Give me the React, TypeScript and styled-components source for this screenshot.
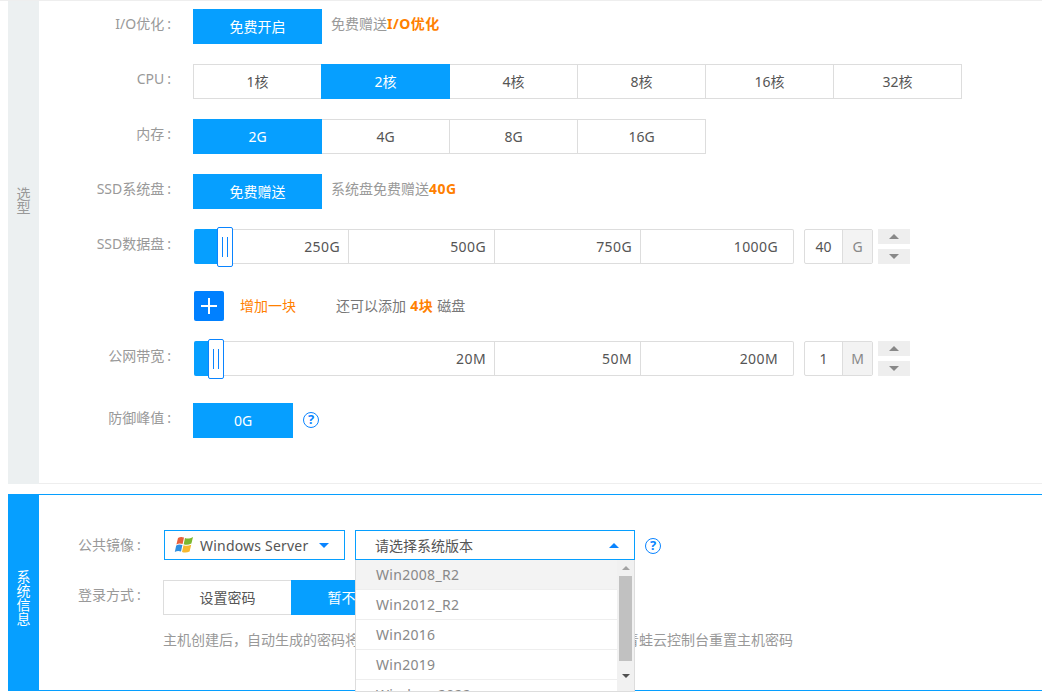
import * as React from 'react';
import styled, { createGlobalStyle, css } from 'styled-components';

const BLUE = '#069fff';
const LINK = '#0a84ff';
const ORANGE = '#ff8000';
const COMMA = '\uFF0C';

const Global = createGlobalStyle`
  html, body {
    margin: 0;
    padding: 0;
    background: #fff;
    overflow: hidden;
  }
  body {
    font-family: "Noto Sans", "Noto Sans CJK SC", sans-serif;
    font-size: 14px;
    color: #555;
  }
  * { box-sizing: border-box; }
`;

const Page = styled.div`
  width: 1042px;
  height: 697px;
  overflow: hidden;
`;

const ModelSection = styled.section`
  display: flex;
  border-top: 1px solid #eee;
  margin-bottom: 10px;
`;

const SystemSection = styled.section`
  display: flex;
  margin-left: 8px;
  border-top: 1px solid #069fff;
  border-bottom: 1px solid #069fff;
`;

const Tab = styled.div<{ $active?: boolean; $top: number }>`
  flex: 0 0 31px;
  margin-left: ${(p) => (p.$active ? '0' : '8px')};
  padding-top: ${(p) => p.$top}px;
  background: ${(p) => (p.$active ? BLUE : '#ecf0f1')};
  color: ${(p) => (p.$active ? '#fff' : '#999')};
  text-align: center;
  line-height: 14px;
`;

const TabChar = styled.div`
  height: 14px;
`;

const Content = styled.div`
  flex: 1;
  display: flex;
  flex-direction: column;
  gap: 20px;
  padding: 8px 0 45px;
  border-bottom: 1px solid #eee;
`;

const SystemContent = styled.div`
  flex: 1;
  display: flex;
  flex-direction: column;
  gap: 20px;
  padding: 35px 0 0 39px;
  height: 195px;
`;

const Row = styled.div<{ $offset?: number }>`
  display: flex;
  align-items: flex-start;
  margin-top: ${(p) => p.$offset || 0}px;
`;

const Label = styled.div`
  flex: 0 0 132px;
  margin-right: 22px;
  text-align: right;
  line-height: 30px;
  color: #999;
  white-space: nowrap;
`;

const SystemLabel = styled.div`
  flex: 0 0 62px;
  min-width: 0;
  margin-right: 23px;
  line-height: 30px;
  color: #999;
  white-space: nowrap;
`;

const Colon = styled.span`
  margin-left: 3px;
`;

const Options = styled.div`
  display: flex;
`;

const Option = styled.div<{ $on?: boolean; $width?: number }>`
  width: ${(p) => p.$width || 129}px;
  height: 35px;
  margin-left: -1px;
  line-height: 34px;
  text-align: center;
  border: 1px solid ${(p) => (p.$on ? BLUE : '#ddd')};
  background: ${(p) => (p.$on ? BLUE : '#fff')};
  color: ${(p) => (p.$on ? '#fff' : '#555')};
  position: relative;
  z-index: ${(p) => (p.$on ? 1 : 0)};
  &:first-child {
    margin-left: 0;
  }
`;

const Note = styled.div`
  margin-left: 9px;
  line-height: 30px;
  color: #999;
`;

const Strong = styled.b`
  color: ${ORANGE};
  font-weight: 700;
  letter-spacing: 0.5px;
`;

const Track = styled.div`
  position: relative;
  display: flex;
  width: 600px;
  height: 35px;
  margin-left: 1px;
  border: 1px solid #ddd;
  border-left: 0;
  border-radius: 2px;
`;

const Mark = styled.div<{ $width: number }>`
  flex: 0 0 ${(p) => p.$width}px;
  margin-bottom: -1px;
  padding-right: 8px;
  text-align: right;
  line-height: 34px;
  letter-spacing: 0.4px;
  border-right: 1px solid #ddd;
  &:nth-last-child(3) {
    flex: 1;
    margin-bottom: 0;
    padding-right: 15px;
    border-right: 0;
  }
`;

const Fill = styled.div<{ $width: number }>`
  position: absolute;
  left: 0;
  top: -1px;
  bottom: -1px;
  width: ${(p) => p.$width}px;
  background: ${BLUE};
  border-radius: 2px 0 0 2px;
`;

const Handle = styled.div<{ $left: number }>`
  position: absolute;
  left: ${(p) => p.$left}px;
  top: -3px;
  width: 16px;
  height: 40px;
  display: flex;
  justify-content: center;
  align-items: center;
  gap: 4px;
  background: #fff;
  border: 1px solid ${LINK};
  border-radius: 2px;
  &::before,
  &::after {
    content: '';
    width: 1px;
    height: 20px;
    background: ${LINK};
  }
`;

const Amount = styled.div`
  display: flex;
  width: 69px;
  height: 35px;
  margin-left: 10px;
  border: 1px solid #ddd;
  border-radius: 2px;
  text-align: center;
  line-height: 33px;
`;

const AmountValue = styled.div`
  flex: 1;
`;

const AmountUnit = styled.div`
  flex: 0 0 30px;
  background: #f3f3f3;
  border-left: 1px solid #ddd;
  color: #888;
`;

const Stepper = styled.div`
  display: flex;
  flex-direction: column;
  justify-content: space-between;
  width: 32px;
  height: 35px;
  margin-left: 5px;
`;

const Step = styled.div`
  height: 15px;
  display: flex;
  align-items: center;
  justify-content: center;
  background: #eee;
`;

const Triangle = styled.i<{ $up?: boolean; $color: string; $size: number }>`
  display: block;
  width: 0;
  height: 0;
  border-left: ${(p) => p.$size}px solid transparent;
  border-right: ${(p) => p.$size}px solid transparent;
  ${(p) =>
    p.$up
      ? css`border-bottom: ${p.$size * 1.15}px solid ${p.$color};`
      : css`border-top: ${p.$size * 1.15}px solid ${p.$color};`}
`;

const AddButton = styled.div`
  flex: 0 0 30px;
  height: 30px;
  margin-left: 1px;
  position: relative;
  background: #0080ff;
  border-radius: 2px;
  &::before,
  &::after {
    content: '';
    position: absolute;
    background: #fff;
  }
  &::before {
    left: 7px;
    top: 14px;
    width: 16px;
    height: 2px;
  }
  &::after {
    left: 14px;
    top: 7px;
    width: 2px;
    height: 16px;
  }
`;

const AddText = styled.div`
  margin-left: 16px;
  width: 96px;
  line-height: 30px;
  color: ${ORANGE};
`;

const AddNote = styled.div`
  line-height: 30px;
  color: #777;
  word-spacing: 0.5px;
`;

const Help = styled.div<{ $left: number; $top: number }>`
  flex: 0 0 16px;
  width: 16px;
  height: 16px;
  margin: ${(p) => p.$top}px 0 0 ${(p) => p.$left}px;
  border: 1.5px solid ${LINK};
  border-radius: 50%;
  color: ${LINK};
  font-size: 13px;
  font-weight: 700;
  line-height: 13px;
  text-align: center;
`;

const SelectGroup = styled.div`
  position: relative;
  display: flex;
  align-items: flex-start;
  margin-left: 1px;
`;

const Select = styled.div<{ $width: number; $pad: number }>`
  display: flex;
  align-items: center;
  justify-content: space-between;
  width: ${(p) => p.$width}px;
  height: 30px;
  margin-right: 10px;
  padding: 0 15px 0 ${(p) => p.$pad}px;
  border: 1px solid ${BLUE};
  white-space: nowrap;
`;

const OsName = styled.span`
  display: flex;
  align-items: center;
  gap: 6px;
  letter-spacing: 0.2px;
`;

const Menu = styled.div`
  position: absolute;
  left: 191px;
  top: 30px;
  width: 280px;
  height: 132px;
  z-index: 5;
  display: flex;
  background: #fff;
  border: 1px solid #ddd;
  border-top: 0;
`;

const MenuList = styled.div`
  flex: 1;
  overflow: hidden;
`;

const MenuItem = styled.div<{ $hover?: boolean }>`
  height: 30px;
  padding-left: 20px;
  line-height: 29px;
  color: #888;
  letter-spacing: 0.3px;
  background: ${(p) => (p.$hover ? '#f3f3f3' : '#fff')};
  border-bottom: 1px solid #eee;
`;

const Rail = styled.div`
  flex: 0 0 17px;
  display: flex;
  flex-direction: column;
  align-items: center;
  padding-top: 6px;
  background: #f1f1f1;
`;

const Thumb = styled.div`
  width: 13px;
  height: 85px;
  margin: 6px 0 13px;
  background: #c1c1c1;
`;

const Hint = styled.div`
  margin: -6px 0 0 85px;
  color: #999;
  white-space: nowrap;
`;

const WindowsLogo = () => (
  <svg width="20" height="18" viewBox="0 0 20 18">
    <path d="M4 2 C6 .8 8 .8 10 1.6 L8.6 8 C6.6 7.2 4.6 7.2 2.4 8.4Z" fill="#e8603c" />
    <path d="M11 1.9 C13.4 3 15.6 2.8 19 1 L17.4 7.6 C14.6 9 12.2 9.2 9.7 8.3Z" fill="#7cb82f" />
    <path d="M2.2 9.4 C4.4 8.2 6.2 8.2 8.4 9 L7 15.6 C5 14.8 3 14.8 .8 16Z" fill="#2f8fe0" />
    <path d="M9.5 9.3 C12 10.2 14.4 10 17.2 8.7 L15.6 15.4 C13 16.8 10.4 16.8 8 15.9Z" fill="#f7b92e" />
  </svg>
);

const VerticalTitle = ({ text }: { text: string }) => (
  <>
    {text.split('').map((c) => (
      <TabChar key={c}>{c}</TabChar>
    ))}
  </>
);

const Slider = ({ fill, handle, marks }: { fill: number; handle: number; marks: { text: string; width: number }[] }) => (
  <Track>
    {marks.map((m) => (
      <Mark key={m.text} $width={m.width}>{m.text}</Mark>
    ))}
    <Fill $width={fill} />
    <Handle $left={handle} />
  </Track>
);

const Spinner = ({ value, unit }: { value: string; unit: string }) => (
  <>
    <Amount>
      <AmountValue>{value}</AmountValue>
      <AmountUnit>{unit}</AmountUnit>
    </Amount>
    <Stepper>
      <Step><Triangle $up $color="#888" $size={5} /></Step>
      <Step><Triangle $color="#888" $size={5} /></Step>
    </Stepper>
  </>
);

const App = () => (
  <Page>
    <Global />
    <ModelSection>
      <Tab $top={186}>
        <VerticalTitle text="选型" />
      </Tab>
      <Content>
        <Row>
          <Label>I/O优化<Colon>:</Colon></Label>
          <Options><Option $on>免费开启</Option></Options>
          <Note>免费赠送<Strong>I/O优化</Strong></Note>
        </Row>
        <Row>
          <Label>CPU<Colon>:</Colon></Label>
          <Options>
            {['1核', '2核', '4核', '8核', '16核', '32核'].map((c) => (
              <Option key={c} $on={c === '2核'}>{c}</Option>
            ))}
          </Options>
        </Row>
        <Row>
          <Label>内存<Colon>:</Colon></Label>
          <Options>
            {['2G', '4G', '8G', '16G'].map((c) => (
              <Option key={c} $on={c === '2G'}>{c}</Option>
            ))}
          </Options>
        </Row>
        <Row>
          <Label>SSD系统盘<Colon>:</Colon></Label>
          <Options><Option $on>免费赠送</Option></Options>
          <Note>系统盘免费赠送<Strong>40G</Strong></Note>
        </Row>
        <Row>
          <Label>SSD数据盘<Colon>:</Colon></Label>
          <Slider
            fill={24}
            handle={23}
            marks={[
              { text: '250G', width: 155 },
              { text: '500G', width: 146 },
              { text: '750G', width: 146 },
              { text: '1000G', width: 153 },
            ]}
          />
          <Spinner value="40" unit="G" />
        </Row>
        <Row $offset={7}>
          <Label />
          <AddButton />
          <AddText>增加一块</AddText>
          <AddNote>还可以添加 <Strong>4块</Strong> 磁盘</AddNote>
        </Row>
        <Row>
          <Label>公网带宽<Colon>:</Colon></Label>
          <Slider
            fill={15}
            handle={14}
            marks={[
              { text: '20M', width: 301 },
              { text: '50M', width: 146 },
              { text: '200M', width: 153 },
            ]}
          />
          <Spinner value="1" unit="M" />
        </Row>
        <Row $offset={7}>
          <Label>防御峰值<Colon>:</Colon></Label>
          <Options><Option $on $width={100}>0G</Option></Options>
          <Help $left={10} $top={9}>?</Help>
        </Row>
      </Content>
    </ModelSection>
    <SystemSection>
      <Tab $active $top={75}>
        <VerticalTitle text="系统信息" />
      </Tab>
      <SystemContent>
        <Row>
          <SystemLabel>公共镜像<Colon>:</Colon></SystemLabel>
          <SelectGroup>
            <Select $width={181} $pad={9}>
              <OsName><WindowsLogo />Windows Server</OsName>
              <Triangle $color={LINK} $size={5} />
            </Select>
            <Select $width={280} $pad={19}>
              请选择系统版本
              <Triangle $up $color={LINK} $size={5} />
            </Select>
            <Menu>
              <MenuList>
                <MenuItem $hover>Win2008_R2</MenuItem>
                <MenuItem>Win2012_R2</MenuItem>
                <MenuItem>Win2016</MenuItem>
                <MenuItem>Win2019</MenuItem>
                <MenuItem>Windows2022</MenuItem>
              </MenuList>
              <Rail>
                <Triangle $up $color="#a3a3a3" $size={4} />
                <Thumb />
                <Triangle $color="#505050" $size={4} />
              </Rail>
            </Menu>
            <Help $left={0} $top={8}>?</Help>
          </SelectGroup>
        </Row>
        <Row>
          <SystemLabel>登录方式<Colon>:</Colon></SystemLabel>
          <Options>
            <Option>设置密码</Option>
            <Option $on>暂不设置</Option>
          </Options>
        </Row>
        <Hint>{`主机创建后${COMMA}自动生成的密码将通过短信发送到您的手机上${COMMA}您也可以登录青蛙云控制台重置主机密码`}</Hint>
      </SystemContent>
    </SystemSection>
  </Page>
);

export default App;
